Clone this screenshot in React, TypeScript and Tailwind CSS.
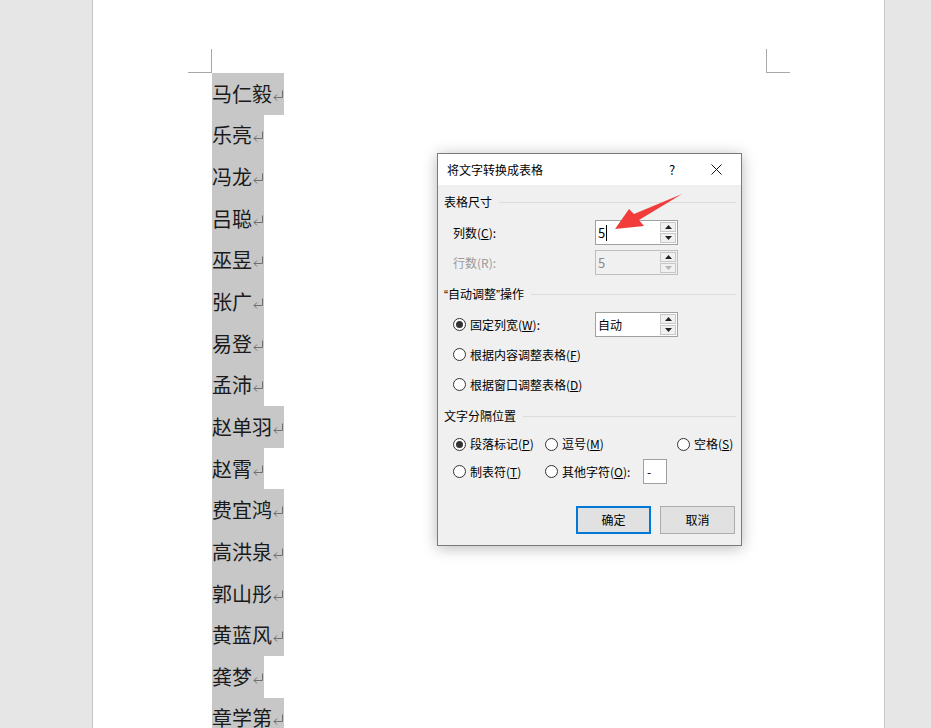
import React from "react";

const NAMES = [
  "马仁毅", "乐亮", "冯龙", "吕聪", "巫昱", "张广", "易登", "孟沛",
  "赵单羽", "赵霄", "费宜鸿", "高洪泉", "郭山彤", "黄蓝风", "龚梦", "章学第",
];

function ReturnMark() {
  return (
    <svg width="12" height="20" viewBox="0 0 12 20" className="shrink-0">
      <path d="M10.5 6.5 V13.5 H2" fill="none" stroke="#6e6e6e" strokeWidth="1" />
      <path d="M5 10.5 L2 13.5 L5 16.5" fill="none" stroke="#6e6e6e" strokeWidth="1" />
    </svg>
  );
}

function Group({ title }: { title: React.ReactNode }) {
  return (
    <div className="flex items-center h-4 pl-[6px] pr-[5px]">
      <span className="whitespace-nowrap">{title}</span>
      <div className="flex-1 ml-[7px] h-px bg-[#dcdcdc]" />
    </div>
  );
}

function Radio({ checked }: { checked?: boolean }) {
  return (
    <span className="w-[13px] h-[13px] shrink-0 rounded-full border border-[#333333] bg-white flex items-center justify-center">
      {checked && <span className="w-[7px] h-[7px] rounded-full bg-[#333333]" />}
    </span>
  );
}

function Tri({ down, dim }: { down?: boolean; dim?: boolean }) {
  return (
    <svg width="7" height="4" viewBox="0 0 7 4">
      <path d={down ? "M0 0 H7 L3.5 4 Z" : "M0 4 H7 L3.5 0 Z"} fill={dim ? "#b5b5b5" : "#222"} />
    </svg>
  );
}

function Spinner({ dim }: { dim?: boolean }) {
  return (
    <div className="w-[17px] flex flex-col gap-px py-px pr-px">
      <div className="flex-1 flex items-center justify-center bg-[#f0f0f0] border border-[#c8c8c8]">
        <Tri />
      </div>
      <div className="flex-1 flex items-center justify-center bg-[#f0f0f0] border border-[#c8c8c8]">
        <Tri down dim={dim} />
      </div>
    </div>
  );
}

function SpinBox({ value, disabled, caret }: { value: string; disabled?: boolean; caret?: boolean }) {
  return (
    <div
      className={`flex w-[83px] h-[25px] border ${
        disabled ? "border-[#bfbfbf] bg-[#f0f0f0] text-[#8a8a8a]" : "border-[#a0a0a0] bg-white text-black"
      }`}
    >
      <div className="flex-1 flex items-center pl-[2px] text-[13px]">
        {value}
        {caret && <span className="w-px h-[16px] bg-black ml-[1px]" />}
      </div>
      <Spinner dim={disabled} />
    </div>
  );
}

function Dialog() {
  return (
    <div className="absolute left-[437px] top-[153px] w-[305px] h-[393px] border border-[#7a7a7a] bg-[#f0f0f0] shadow-[0_2px_14px_rgba(0,0,0,0.28)] text-[12px] text-black font-['Noto_Sans_CJK_SC',sans-serif] flex flex-col">
      {/* title */}
      <div className="h-[31px] bg-white flex items-center pl-[9px]">
        <span className="flex-1">将文字转换成表格</span>
        <span className="w-[10px] text-[13px] text-center mr-[34px]">?</span>
        <svg width="11" height="11" viewBox="0 0 11 11" className="mr-[19px]">
          <path d="M0.5 0.5 L10.5 10.5 M10.5 0.5 L0.5 10.5" stroke="#111" strokeWidth="1" />
        </svg>
      </div>

      <div className="flex-1 flex flex-col">
        <div className="mt-[9px]">
          <Group title="表格尺寸" />
        </div>
        <div className="mt-[10px] h-[25px] flex items-center pl-[15px]">
          <span className="w-[142px]">
            列数(<u>C</u>):
          </span>
          <SpinBox value="5" caret />
        </div>
        <div className="mt-[5px] h-[25px] flex items-center pl-[15px] text-[#9a9a9a]">
          <span className="w-[142px]">行数(R):</span>
          <SpinBox value="5" disabled />
        </div>

        <div className="mt-[11px]">
          <Group
            title={
              <>
                <span className="font-['Liberation_Sans',sans-serif]">“</span>自动调整
                <span className="font-['Liberation_Sans',sans-serif]">”</span>操作
              </>
            }
          />
        </div>
        <div className="mt-[10px] h-[25px] flex items-center pl-[15px]">
          <div className="w-[142px] flex items-center gap-[4px]">
            <Radio checked />
            <span>
              固定列宽(<u>W</u>):
            </span>
          </div>
          <div className="flex w-[83px] h-[25px] border border-[#a0a0a0] bg-white">
            <div className="flex-1 flex items-center pl-[2px]">自动</div>
            <Spinner />
          </div>
        </div>
        <div className="mt-[5px] h-[25px] flex items-center gap-[4px] pl-[15px]">
          <Radio />
          <span>
            根据内容调整表格(<u>F</u>)
          </span>
        </div>
        <div className="mt-[5px] h-[25px] flex items-center gap-[4px] pl-[15px]">
          <Radio />
          <span>
            根据窗口调整表格(<u>D</u>)
          </span>
        </div>

        <div className="mt-[11px]">
          <Group title="文字分隔位置" />
        </div>
        <div className="mt-[8px] h-[24px] flex items-center pl-[15px]">
          <div className="w-[92px] flex items-center gap-[4px]">
            <Radio checked />
            <span>
              段落标记(<u>P</u>)
            </span>
          </div>
          <div className="w-[132px] flex items-center gap-[4px]">
            <Radio />
            <span>
              逗号(<u>M</u>)
            </span>
          </div>
          <div className="flex items-center gap-[4px]">
            <Radio />
            <span>
              空格(<u>S</u>)
            </span>
          </div>
        </div>
        <div className="mt-[3px] h-[25px] flex items-center pl-[15px]">
          <div className="w-[92px] flex items-center gap-[4px]">
            <Radio />
            <span>
              制表符(<u>T</u>)
            </span>
          </div>
          <div className="w-[98px] flex items-center gap-[4px]">
            <Radio />
            <span>
              其他字符(<u>O</u>):
            </span>
          </div>
          <div className="w-[24px] h-[25px] border border-[#a0a0a0] bg-white flex items-center pl-[3px]">-</div>
        </div>

        <div className="mt-[22px] flex justify-end gap-[9px] pr-[6px]">
          <button className="w-[75px] h-[28px] bg-[#e1e1e1] border-2 border-[#0078d7]">确定</button>
          <button className="w-[75px] h-[28px] bg-[#e1e1e1] border border-[#adadad]">取消</button>
        </div>
      </div>
    </div>
  );
}

export default function App() {
  return (
    <div className="relative w-[931px] h-[728px] overflow-hidden bg-[#e6e6e6]">
      <div className="ml-[92px] w-[793px] h-full bg-white border-x border-[#c6c6c6] pt-[49px]">
        {/* corner marks */}
        <div className="flex">
          <div className="ml-[95px] w-[24px] h-[24px] border-r border-b border-[#a8a8a8]" />
          <div className="ml-auto mr-[94px] w-[24px] h-[24px] border-l border-b border-[#a8a8a8]" />
        </div>

        {/* selected name list */}
        <div className="ml-[119px] flex flex-col font-['Noto_Sans_CJK_SC',sans-serif] text-[20px] text-[#1a1a1a]">
          {NAMES.map((n) => (
            <div key={n} className="h-[41.65px] flex">
              <span className="bg-[#c7c7c7] flex items-center h-full leading-none">
                {n}
                <ReturnMark />
              </span>
            </div>
          ))}
        </div>
      </div>

      <Dialog />

      {/* red annotation arrow */}
      <svg className="absolute left-0 top-0 pointer-events-none" width="931" height="728">
        <polygon
          points="615,229 629,209 634,214 682,194 639,220 644,226"
          fill="#f23c3c"
        />
      </svg>
    </div>
  );
}
